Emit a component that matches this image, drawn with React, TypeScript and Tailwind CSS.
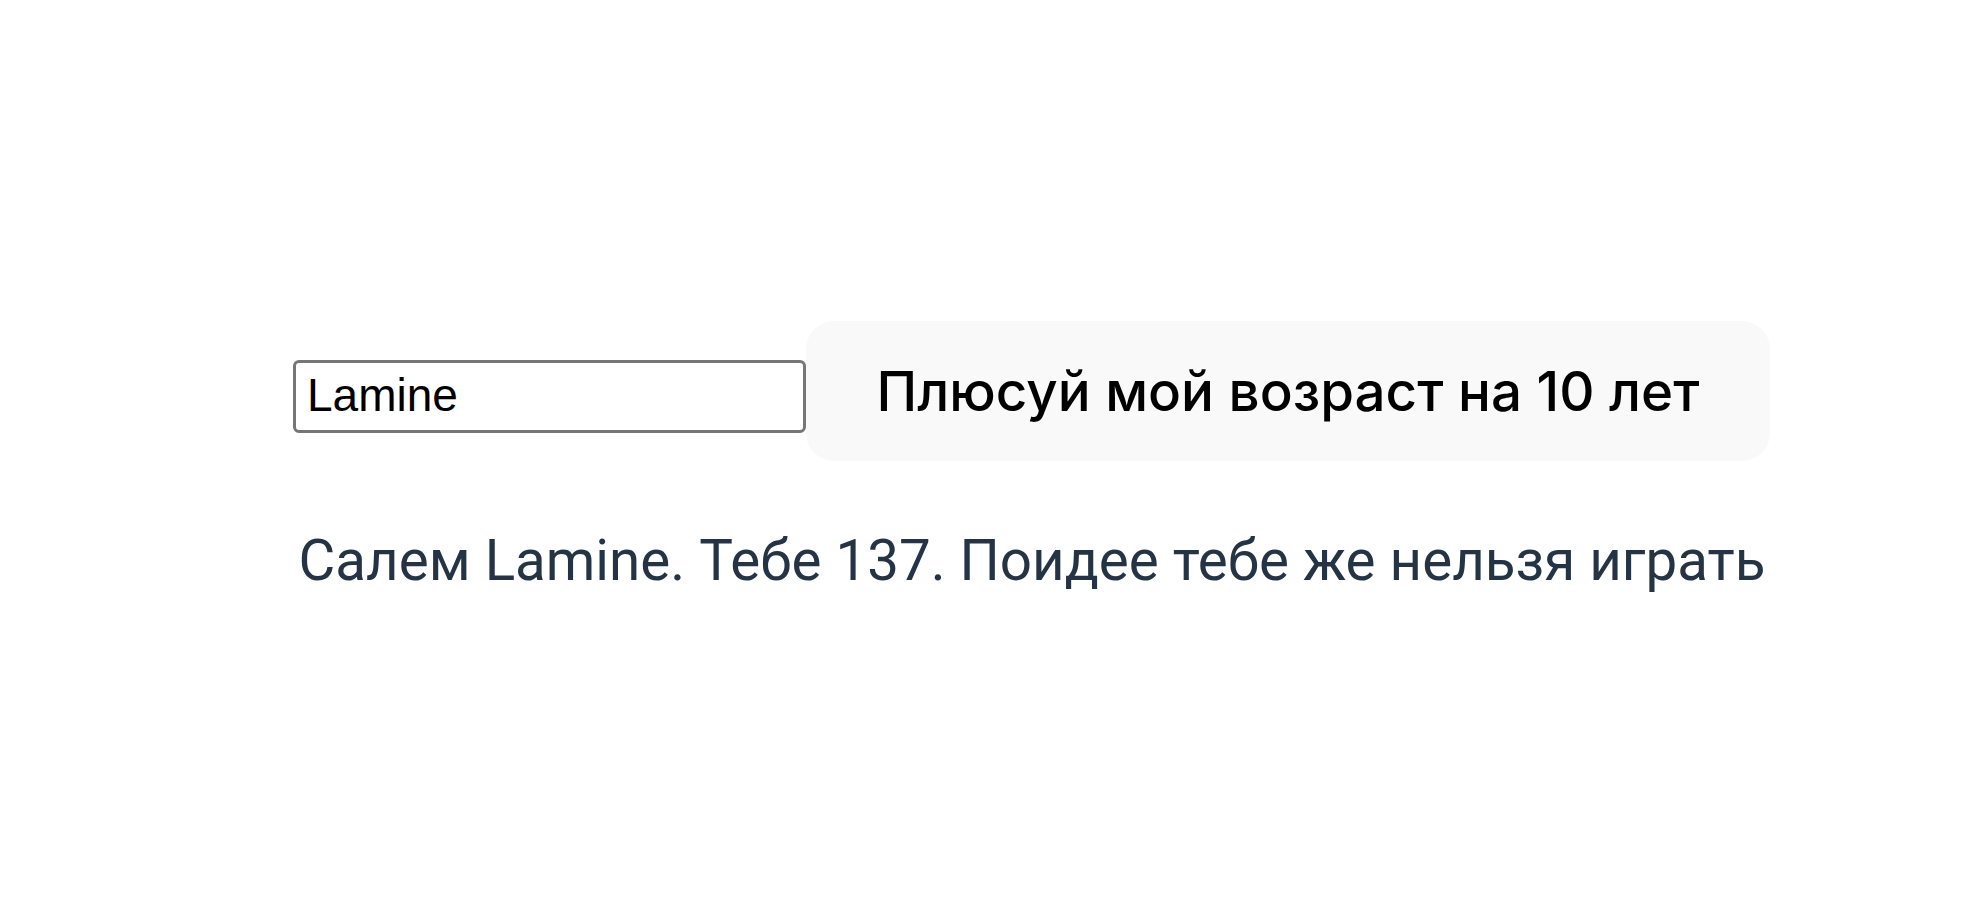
import React, { useState } from 'react';

export default function App() {
  const [name, setName] = useState('Lamine');
  const [age, setAge] = useState(127);

  return (
    <div className="min-h-screen bg-white pt-[321px] pl-[293px]">
      <div className="w-[1478px]">
        {/* Name input + age button */}
        <div className="flex items-baseline">
          <input
            value={name}
            onChange={(e) => setName(e.target.value)}
            className="w-[513px] h-[73px] border-[3px] border-[#767676] rounded-[6px] pl-[11px] pr-[12px] pb-[4px] text-[46px] text-black bg-white outline-none"
            style={{ fontFamily: '"Liberation Sans", Arial, sans-serif' }}
          />
          <button
            onClick={() => setAge(age + 10)}
            className="w-[964px] h-[140px] rounded-[28px] bg-[#f9f9f9] text-[54.7px] font-medium text-black"
            style={{ fontFamily: 'Inter, "Noto Sans", sans-serif' }}
          >
            Плюсуй мой возраст на 10 лет
          </button>
        </div>

        <p
          className="mt-[67px] text-center whitespace-nowrap text-[56.5px] leading-[67px] text-[#253445]"
          style={{ fontFamily: 'Roboto, "Noto Sans", sans-serif' }}
        >
          Салем {name}. Тебе {age + 10}. Поидее тебе же нельзя играть
        </p>
      </div>
    </div>
  );
}
